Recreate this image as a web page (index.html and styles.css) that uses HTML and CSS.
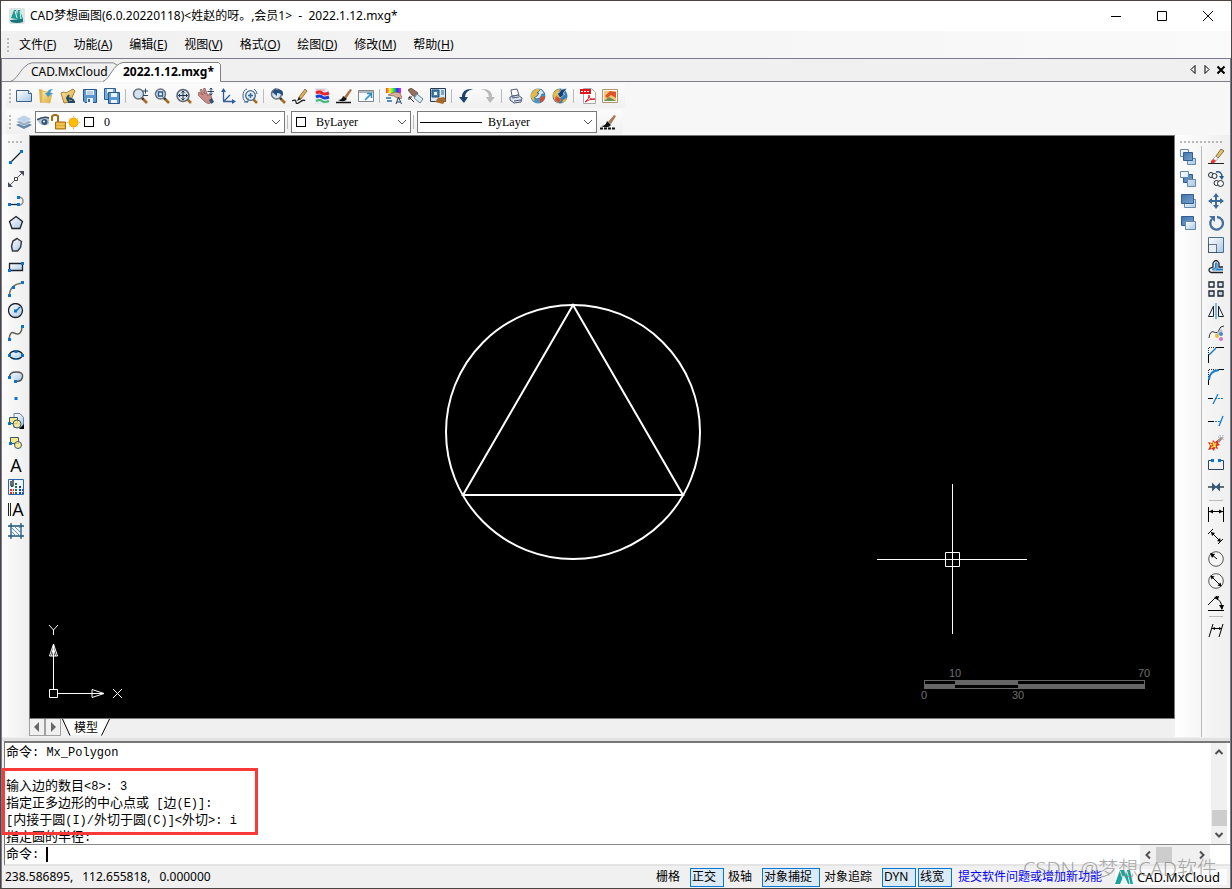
FILE: index.html
```html
<!DOCTYPE html>
<html lang="zh-CN">
<head>
<meta charset="utf-8">
<title>CAD梦想画图</title>
<link rel="stylesheet" href="styles.css">
</head>
<body>
<svg class="defs" aria-hidden="true">
  <defs>
    <linearGradient id="sky" x1="0" y1="0" x2="1" y2="1"><stop offset="0" stop-color="#ffffff"/><stop offset="1" stop-color="#a9c8e6"/></linearGradient>
    <linearGradient id="steel" x1="0" y1="0" x2="1" y2="1"><stop offset="0" stop-color="#3f73ad"/><stop offset="1" stop-color="#7aa3cd"/></linearGradient>
    <linearGradient id="gold" x1="0" y1="0" x2="1" y2="1"><stop offset="0" stop-color="#fbe9a5"/><stop offset="1" stop-color="#d9a53c"/></linearGradient>
    <linearGradient id="rainbow"><stop offset="0" stop-color="#f33"/><stop offset=".25" stop-color="#fe2"/><stop offset=".5" stop-color="#2e4"/><stop offset=".75" stop-color="#23f"/><stop offset="1" stop-color="#f2c"/></linearGradient>
    <symbol id="lens" viewBox="0 0 16 16"><path d="M10 10l5 5" stroke="#a56a28" stroke-width="2.6"/><path d="M9.500 9.500l2 2" stroke="#333" stroke-width="2"/><circle cx="6.500" cy="6" r="5" fill="#d4e2ef" stroke="#6a737c" stroke-width="1.500"/></symbol>
  </defs>
</svg>
<div class="window">
  <header class="titlebar">
    <svg class="app-logo" viewBox="0 0 16 16"><rect width="16" height="16" rx="2" fill="#dce5e5"/><path d="M2 10L5 2h2l1 5 1-5h2l3 9-3 1z" fill="#1b9a94"/><path d="M6 3l2 7M11 3l1 8" stroke="#e9f5f4"/><path d="M1 12l13-1v3q-6 2-12 0z" fill="#18747a"/></svg>
    <h1 class="title">CAD梦想画图(6.0.20220118)&lt;姓赵的呀。,会员1&gt;&nbsp; - &nbsp;2022.1.12.mxg*</h1>
    <button class="winbtn" aria-label="最小化"><svg viewBox="0 0 12 12"><path d="M1 6.500h10" class="k"/></svg></button>
    <button class="winbtn" aria-label="最大化"><svg viewBox="0 0 12 12"><path d="M1.500 1.500h9v9h-9z" class="k"/></svg></button>
    <button class="winbtn" aria-label="关闭"><svg viewBox="0 0 12 12"><path d="M1 1l10 10M11 1L1 11" class="k"/></svg></button>
  </header>
  <nav class="menubar" aria-label="菜单">
    <span class="grip"></span>
    <button class="menu">文件(<u>F</u>)</button><button class="menu">功能(<u>A</u>)</button><button class="menu">编辑(<u>E</u>)</button><button class="menu">视图(<u>V</u>)</button><button class="menu">格式(<u>O</u>)</button><button class="menu">绘图(<u>D</u>)</button><button class="menu">修改(<u>M</u>)</button><button class="menu">帮助(<u>H</u>)</button>
  </nav>
  <main class="frame">
    <div class="doctabs">
      <button class="doctab first"><svg class="tabshape" viewBox="0 0 112 20"><path d="M0 19.500C8 17 11 2 22 .5H106L112 4V20" fill="#f0f0f0" stroke="#808088"/></svg><span>CAD.MxCloud</span></button>
      <button class="doctab active"><svg class="tabshape" viewBox="0 0 118 20"><path d="M0 19.500C7 17 10 2 20 .5H115.500L117.500 2.500V19.500" fill="#fff" stroke="#808088"/><path d="M2 19.500H117" stroke="#fff"/></svg><span>2022.1.12.mxg*</span></button>
      <span class="fill"></span>
      <div class="tabnav">
        <button aria-label="上一个"><svg viewBox="0 0 10 10"><path d="M7 .500v8L3 4.500z" class="k"/></svg></button>
        <button aria-label="下一个"><svg viewBox="0 0 10 10"><path d="M3 .500v8L7 4.500z" class="k"/></svg></button>
        <button aria-label="关闭标签"><svg viewBox="0 0 10 10"><path d="M1.500 1.500l7 7M8.500 1.500l-7 7" class="k bold"/></svg></button>
      </div>
    </div>
    <div class="toolbars">
      <div class="toolbar">
        <span class="grip"></span>
        <button class="tool" aria-label="新建"><svg viewBox="0 0 16 16"><path d="M.5 2.500h12l3 3v8H.5z" fill="url(#sky)" stroke="#3f6186"/><path d="M12.500 2.500v3h3" fill="#fff" stroke="#3f6186"/></svg></button>
        <button class="tool" aria-label="打开"><svg viewBox="0 0 16 16"><path d="M1 1l4 1 1 12-4 1z" fill="#dfb04a"/><path d="M4 3l10 2-2 10-8-1z" fill="url(#gold)" stroke="#e3c069"/><path d="M15 1q-2 1-3 4h3l-5 4-3-4h2q1-4 6-4z" fill="#3e9bd5"/></svg></button>
        <button class="tool" aria-label="打开网络文件"><svg viewBox="0 0 16 16"><path d="M1 5l3-1 2 1 7-4 2 2-5 11-6 1z" fill="url(#gold)" stroke="#ad812c"/><path d="M15 14H8M9 7l-2 3 2 4M7 10q4 0 7 3" fill="none" stroke="#24496c" stroke-width="2"/></svg></button>
        <button class="tool" aria-label="保存"><svg viewBox="0 0 16 16"><path d="M1.500 1.500h13v13H3l-1.500-1.500z" fill="#5c98d1" stroke="#27548c"/><path d="M4 2h8v5H4zM5 10h6v5H5z" fill="#edf5fc"/><path d="M5 4h6M5 6h6" stroke="#8eaccb"/><path d="M6 11h2v3H6z" fill="#346ca3"/></svg></button>
        <button class="tool" aria-label="另存为"><svg viewBox="0 0 16 16"><path d="M.5.5h11v11H.5z" fill="#76abd9" stroke="#315e95"/><path d="M3 1h6v4H3z" fill="#edf5fc"/><path d="M4.500 4.500h11v11h-11z" fill="#5c98d1" stroke="#27548c"/><path d="M7 5h6v4H7zM7 12h6v3H7z" fill="#edf5fc"/></svg></button>
        <span class="sep"></span>
        <button class="tool" aria-label="缩放"><svg viewBox="0 0 16 16"><use href="#lens"/><path d="M11 3h5M13.500.5v5M11 7.500h5" stroke="#264865"/></svg></button>
        <button class="tool" aria-label="窗口缩放"><svg viewBox="0 0 16 16"><use href="#lens"/><path d="M4.500 4h4v4h-4z" fill="#fff" stroke="#245c95" stroke-width="1.500"/></svg></button>
        <button class="tool" aria-label="范围缩放"><svg viewBox="0 0 16 16"><path d="M11 11l4 4" stroke="#a56a28" stroke-width="2.500"/><circle cx="7" cy="7.500" r="6" fill="#d4dfe8" stroke="#59636d" stroke-width="1.500"/><path d="M7 3v9M2.500 7.500h9M5.500 4.500L7 3l1.500 1.500M5.500 10.500L7 12l1.500-1.500M4 6L2.500 7.500 4 9M10 6l1.500 1.500L10 9" stroke="#203447" fill="none"/></svg></button>
        <button class="tool" aria-label="平移"><svg viewBox="0 0 16 16"><path d="M0 5l2-1 3 3-3-5 1-1 4 5-2-5 2-1 3 8 1-2 2 1 1 5-3 4-4-2-7-7z" fill="#c98b88" stroke="#774847" stroke-width=".6"/><path d="M11 12l3-2 2 4-3 2z" fill="#31536f"/><path d="M13 0v7M9.500 3.500h7M11.500 1.500L13 0l1.500 1.500M11.500 5.500L13 7l1.500-1.500" stroke="#244863" fill="none"/></svg></button>
        <button class="tool" aria-label="坐标系"><svg viewBox="0 0 16 16"><path d="M3.500 13V2M3 13.500h11M4 13l6-6" stroke="#2d5e9a" stroke-width="1.300"/><path d="M1 4l2.500-4L6 4zM12 11l4 2.500-4 2.500z" fill="#2d5e9a"/></svg></button>
        <button class="tool" aria-label="实时缩放"><svg viewBox="0 0 16 16"><path d="M11 11l4 4" stroke="#a56a28" stroke-width="2.500"/><circle cx="8.500" cy="7.500" r="4.800" fill="#e7f1fa" stroke="#41698f" stroke-width="1.300"/><path d="M5 1Q1 2 1 8t5 6M2 14h4v-4M12 1q3 2 3 5" fill="none" stroke="#41698f"/><path d="M8.500 5v5M6 7.500h5" stroke="#3269a0" stroke-width="1.500"/></svg></button>
        <span class="sep"></span>
        <button class="tool" aria-label="上一视图"><svg viewBox="0 0 16 16"><use href="#lens"/><path d="M2 4l4-4v2q8-2 7 6-2-3-6-3v3z" fill="#254e80"/></svg></button>
        <button class="tool" aria-label="画笔"><svg viewBox="0 0 16 16"><path d="M0 13q4-2 4 1t4 0 5-1" stroke="#222" fill="none" stroke-width="1.300"/><path d="M6 12l1-3 6-8 2 2-6 8z" fill="#e3ae5c" stroke="#795023" stroke-width=".7"/><path d="M5 13l2-4 2 2z" fill="#222"/></svg></button>
        <button class="tool" aria-label="图层颜色"><svg viewBox="0 0 16 16"><path d="M1 0h11l3 2v14H1z" fill="#dfebf4"/><path d="M2 2h9" stroke="#f28c8c"/><path d="M2 5q4-2 6 0t7 0" stroke="#e8222c" stroke-width="3" fill="none"/><path d="M2 9q4-2 6 0t7 0" stroke="#1d3fd0" stroke-width="3" fill="none"/><path d="M2 13q4-2 6 0t7 0" stroke="#42b773" stroke-width="2" fill="none"/></svg></button>
        <button class="tool" aria-label="刷子"><svg viewBox="0 0 16 16"><path d="M8 9l6-8 2 1-6 9z" fill="#aa7147"/><path d="M2 12q4 0 5-4l4 3q-3 4-9 1z" fill="#111"/><path d="M0 14.500h15" stroke="#111" stroke-width="1.500"/></svg></button>
        <button class="tool" aria-label="全屏"><svg viewBox="0 0 16 16"><path d="M.5 2.500h15v11H.5z" fill="#f7fcff" stroke="#81868b"/><path d="M1 4h14" stroke="#b2b7bc" stroke-width="2"/><path d="M7 12l6-6M9 5.500h4.500V10" stroke="#238fce" fill="none" stroke-width="1.500"/></svg></button>
        <span class="sep"></span>
        <button class="tool" aria-label="特性"><svg viewBox="0 0 16 16"><path d="M0 0h15v5H0z" fill="url(#rainbow)"/><path d="M2 7l7-3 5 1 2 5-3 1-5-3z" fill="#dab099" stroke="#835a4a" stroke-width=".7"/><path d="M0 10h5M1 13h5" stroke="#246fa8" stroke-width="1.500"/><path d="M10 16l2.500-7 3 7M11 14h3" fill="none" stroke="#253d5a"/></svg></button>
        <button class="tool" aria-label="特性匹配"><svg viewBox="0 0 16 16"><path d="M0 2l3-2 7 5-3 4-3-2z" fill="#96705f" stroke="#54453e" stroke-width=".8"/><path d="M9 6l6 5-3 4-6-5z" fill="#d8ebf7" stroke="#668296"/><path d="M6 14L1 9M1 12V9h3" stroke="#222" fill="none"/></svg></button>
        <button class="tool" aria-label="块编辑"><svg viewBox="0 0 16 16"><path d="M.5.5h15v13H.5z" fill="#dbe9f4" stroke="#253d59"/><path d="M2 2h7v7H2z" fill="#4c81ad" stroke="#1c4d77"/><path d="M4 4h3v3H4z" fill="#e3f2ff"/><path d="M11 2h3v5h-3z" fill="#7fa3c2"/><path d="M5 14l3-4 6-1 2 3-3 4z" fill="#a76a29"/></svg></button>
        <span class="sep"></span>
        <button class="tool" aria-label="撤销"><svg viewBox="0 0 16 16"><path d="M15 1Q4 0 4 9H1l5 6 4-6H7q0-6 8-8z" fill="#1c416f"/></svg></button>
        <button class="tool" aria-label="重做"><svg viewBox="0 0 16 16"><path d="M1 1q11-1 11 8h3l-5 6-4-6h3Q9 3 1 1z" fill="#b9b9b9"/></svg></button>
        <span class="sep"></span>
        <button class="tool" aria-label="打印"><svg viewBox="0 0 16 16"><path d="M4 8L3 2l6-1 2 6z" fill="#fff" stroke="#555f7c"/><path d="M2 9l8-2 4 3-1 4-7 1-4-3z" fill="#dde3ee" stroke="#4c5878"/><path d="M4 10l7-1M6 13l7-1" stroke="#4c5878"/></svg></button>
        <button class="tool" aria-label="网页"><svg viewBox="0 0 16 16"><circle cx="8" cy="8" r="7.500" fill="#4b94c4"/><path d="M1 6q4-6 8-5l3 3-6 4-2 5q-4-3-3-7z" fill="#e8b844"/><path d="M10 9l5-1q0 5-5 7z" fill="#d64e2b"/><path d="M4 10q6 3 8-4h3l-4-5-4 4h2q-1 3-5 5z" fill="#d3ecff" stroke="#285782" stroke-width=".7"/></svg></button>
        <button class="tool" aria-label="导入网页"><svg viewBox="0 0 16 16"><circle cx="8" cy="8" r="7.500" fill="#367fb5"/><path d="M1 6q3-5 7-5L6 7l3 5-3 3q-5-3-5-9z" fill="#efb936"/><path d="M4 8l5 3-2 4-4-3z" fill="#d64e2b"/><path d="M11 12l4-2q-1 4-5 5z" fill="#efb936"/><path d="M15 1Q9 0 7 5H5l3 5 5-4h-2q1-3 4-5z" fill="#193e70" stroke="#d3ecff" stroke-width=".6"/></svg></button>
        <span class="sep"></span>
        <button class="tool" aria-label="输出PDF"><svg viewBox="0 0 16 16"><path d="M3.500.5h8l4 4v11h-12z" fill="#fff" stroke="#aaa"/><path d="M0 1h11v5H0z" fill="#df161d"/><path d="M5 14q5-4 4-7 0 5 6 4-6 0-10 3z" fill="none" stroke="#df161d"/><path d="M1 3.500h9" stroke="#fff" stroke-dasharray="2 1"/></svg></button>
        <button class="tool" aria-label="输出图片"><svg viewBox="0 0 16 16"><path d="M.5 1.500h15v13H.5z" fill="#fff" stroke="#b39272"/><path d="M2 3h12v10H2z" fill="#f7c67a"/><path d="M3 8l5-5 6 1v6l-5-3-4 3z" fill="#dd5426"/><path d="M2 13l5-4 7 4z" fill="#669253"/></svg></button>
      </div>
      <div class="toolbar">
        <span class="grip"></span>
        <button class="tool" aria-label="图层管理"><svg viewBox="0 0 16 16"><path d="M0 11l8-4 8 4-8 4z" fill="#6685a4"/><path d="M0 8l8-4 8 4-8 4z" fill="#92aec8" stroke="#fff" stroke-width=".5"/><path d="M0 5l8-4 8 4-8 4z" fill="#bed3e5" stroke="#fff" stroke-width=".5"/></svg></button>
        <div class="combo layer">
          <svg class="small" viewBox="0 0 13 16"><path d="M0 5q6-3 12-1v6q-6 3-10-1z" fill="#b8c4d1"/><path d="M0 6q6-4 12-2" stroke="#324b66" fill="none" stroke-width="1.500"/><circle cx="7.500" cy="8" r="3" fill="#33587e"/><circle cx="7" cy="7.500" r="1" fill="#fff"/></svg>
          <svg class="lock" viewBox="0 0 16 16"><path d="M1.500 7V2.500Q4-.5 7.500 2v6" fill="none" stroke="#a36f16" stroke-width="2"/><path d="M5 8h10v7H5z" fill="#e2a92b" stroke="#a36f16"/><path d="M6 10h8M6 13h8" stroke="#ffe085"/></svg>
          <svg class="small" viewBox="0 0 13 16"><path d="M6.500 2v13M0 8.500h13M2 4l9 9M11 4l-9 9" stroke="#e5bb45" stroke-dasharray="1 1"/><circle cx="6.500" cy="8.500" r="4.500" fill="#ffbf00" stroke="#f19c0c"/></svg>
          <span class="swatch"></span>
          <select aria-label="图层"><option>0</option></select>
          <svg class="chev" viewBox="0 0 10 10"><path d="M1 3l4 4 4-4"/></svg>
        </div>
        <span class="sep"></span>
        <div class="combo color">
          <span class="swatch"></span>
          <select aria-label="颜色"><option>ByLayer</option></select>
          <svg class="chev" viewBox="0 0 10 10"><path d="M1 3l4 4 4-4"/></svg>
        </div>
        <span class="sep"></span>
        <div class="combo linetype">
          <span class="line"></span>
          <select aria-label="线型"><option>ByLayer</option></select>
          <svg class="chev" viewBox="0 0 10 10"><path d="M1 3l4 4 4-4"/></svg>
        </div>
        <button class="tool" aria-label="线型刷"><svg viewBox="0 0 16 16"><path d="M8 8l6-7 2 1-5 8z" fill="#ad795b"/><path d="M1 12q5 0 6-5l4 4q-3 4-10 1z" fill="#111"/><path d="M0 14.500h16" stroke="#111" stroke-width="2" stroke-dasharray="3 1"/></svg></button>
      </div>
    </div>
    <div class="workspace">
      <aside class="side left" aria-label="绘图工具">
        <span class="hgrip"></span>
        <button class="tool" aria-label="直线"><svg viewBox="0 0 16 16"><path d="M3 13L13 3" class="d b"/><path d="M1 12h3v3H1zM12 1h3v3h-3z" class="n"/></svg></button>
        <button class="tool" aria-label="构造线"><svg viewBox="0 0 16 16"><path d="M1 15L15 1" stroke="#555"/><path d="M0 16v-5l5 5zM16 0v5l-5-5z" fill="#444b5c"/><path d="M6.500 6.500h3v3h-3z" fill="#fff" stroke="#444"/></svg></button>
        <button class="tool" aria-label="多段线"><svg viewBox="0 0 16 16"><path d="M2 11.500h9" class="d b"/><path d="M10 4q5 0 5 4t-4 4" fill="none" stroke="#999184" stroke-width="1.500"/><path d="M0 10h3v3H0zM9 3h3v3H9zM9 10h3v3H9z" class="n"/></svg></button>
        <button class="tool" aria-label="正多边形"><svg viewBox="0 0 16 16"><path d="M8 1.500L14.500 6.500 12 13.500H4L1.500 6.500z" fill="url(#sky)" class="d"/></svg></button>
        <button class="tool" aria-label="面域"><svg viewBox="0 0 16 16"><path d="M9 1.500l4.500 3-1 6-3 3.500H4.500l-1-5 1.500-5z" fill="url(#sky)" stroke="#3b3d42" stroke-width="1.500"/></svg></button>
        <button class="tool" aria-label="矩形"><svg viewBox="0 0 16 16"><path d="M1.500 4.500h13v7h-13z" fill="url(#sky)" class="d"/><path d="M0 10h3v3H0zM13 3h3v3h-3z" class="n"/></svg></button>
        <button class="tool" aria-label="圆弧"><svg viewBox="0 0 16 16"><path d="M1.500 14Q2 3 15 2" fill="none" stroke="#77715f" stroke-width="1.500"/><path d="M0 13h3v3H0zM4 5h3v3H4zM13 0h3v3h-3z" class="n"/></svg></button>
        <button class="tool" aria-label="圆"><svg viewBox="0 0 16 16"><circle cx="7.500" cy="7.500" r="7" fill="url(#sky)" class="d"/><path d="M8 8l4-4" stroke="#0868bf" stroke-width="1.500"/><path d="M6 6.500h3v3H6z" class="n"/></svg></button>
        <button class="tool" aria-label="样条曲线"><svg viewBox="0 0 16 16"><path d="M1 14Q2 6 6 8t6 0q2-2 2-6" fill="none" stroke="#656257" stroke-width="1.500"/><path d="M0 13h3v3H0zM13 0h3v3h-3z" class="n"/></svg></button>
        <button class="tool" aria-label="椭圆"><svg viewBox="0 0 16 16"><ellipse cx="8" cy="8" rx="6.500" ry="4" fill="url(#sky)" class="d"/><path d="M0 7h3v3H0zM13 7h3v3h-3zM6.500 3h3v3h-3zM6.500 11h3v2h-3z" class="n"/></svg></button>
        <button class="tool" aria-label="椭圆弧"><svg viewBox="0 0 16 16"><path d="M1.500 8q0-5 7-5t6 5-6 4" fill="url(#sky)" stroke="#555" stroke-width="1.500"/><path d="M0 7h3v3H0zM6 11h3v3H6z" class="n"/></svg></button>
        <button class="tool" aria-label="点"><svg viewBox="0 0 16 16"><path d="M6.500 6h3v3h-3z" class="n"/></svg></button>
        <button class="tool" aria-label="插入块"><svg viewBox="0 0 16 16"><path d="M6 .5h6l3.500 4v10H6z" fill="url(#sky)" stroke="#6283a5"/><path d="M1.500 4.500h8v6h-8z" fill="#f7e985" stroke="#385775"/><circle cx="9" cy="11" r="4" fill="#f7e985" fill-opacity=".8" stroke="#385775"/><path d="M0 9h3v3H0z" class="n"/><path d="M16 11v5h-5z"/></svg></button>
        <button class="tool" aria-label="创建块"><svg viewBox="0 0 16 16"><path d="M2.500 2.500h8v6h-8z" fill="#f7e985" stroke="#385775"/><circle cx="10" cy="10" r="3.500" fill="#f7e985" fill-opacity=".8" stroke="#385775"/><path d="M1 7h3v3H1z" class="n"/></svg></button>
        <button class="tool letter" aria-label="单行文字">A</button>
        <button class="tool" aria-label="图片"><svg viewBox="0 0 16 16"><path d="M.5.5h15v15H.5z" fill="#eef7ff" stroke="#2866ae"/><path d="M3 2v4q0 2 2 1V1" fill="none" class="d"/><path d="M2 11h4M2 14h4" stroke="#e32626" stroke-width="2" stroke-dasharray="2 1"/><path d="M7 5h2M7 8h3M7 11h3M7 14h3" stroke="#286e39" stroke-width="2" stroke-dasharray="2 1"/><path d="M11 8h2M11 11h4M11 14h4" stroke="#253f91" stroke-width="2" stroke-dasharray="2 1"/></svg></button>
        <button class="tool letter" aria-label="多行文字"><span class="bars"></span>A</button>
        <button class="tool" aria-label="图案填充"><svg viewBox="0 0 16 16"><path d="M0 3h16M0 13h16M3 0v16M13 0v16" stroke="#1d537c" stroke-width="1.300"/><path d="M3 4l9 9M7 4l6 6M11 4l2 2M3 8l5 5" stroke="#5b91bd"/></svg></button>
      </aside>
      <section class="center">
        <div class="canvas">
          <svg class="figure" viewBox="0 0 260 260"><circle cx="129" cy="130" r="127"/><path d="M129 3L19 193H239z"/></svg>
          <svg class="cross" viewBox="0 0 151 151"><path d="M0 75.500h150M75.500 0v150M68.500 68.500h14v14h-14z"/></svg>
          <svg class="ucs" viewBox="0 0 90 80"><path d="M5 3l4.500 5L14 3M9.500 8v5M9.500 22l-4 12h8zM9.500 25l-2 9M9.500 25l2 9M9.500 22v45M5.500 67.500h8v8h-8zM13.500 71.500h46M60 71.500l-12-4v8zM69 67l9 9M78 67l-9 9"/></svg>
          <svg class="scale" viewBox="0 0 240 38"><path d="M10 16h221v9H10z" fill="#666"/><path d="M11 17h30v3H11zM41 21h63v3H41zM104 17h126v3H104z"/><text x="35" y="13">10</text><text x="224" y="13">70</text><text x="7" y="35">0</text><text x="98" y="35">30</text></svg>
        </div>
        <div class="modelbar">
          <button class="step" aria-label="向左"><svg viewBox="0 0 8 10"><path d="M6 0v10L1 5z"/></svg></button>
          <button class="step" aria-label="向右"><svg viewBox="0 0 8 10"><path d="M2 0v10l5-5z"/></svg></button>
          <button class="model"><svg class="tabshape" viewBox="0 0 48 17"><path d="M0 0h48L40 16H8z" fill="#fff"/><path d="M.5 0L8 16.500M39.500 16.500L47.500 0" class="k"/></svg><span>模型</span></button>
        </div>
      </section>
      <aside class="side right" aria-label="修改工具">
        <span class="hgrip wide"></span>
        <div class="cols">
          <div class="col order">
            <button class="tool" aria-label="前置"><svg viewBox="0 0 16 16"><path d="M.5.5h8v7h-8zM7.500 9.500h8v6h-8z" fill="url(#sky)" stroke="#6689ac"/><path d="M3.500 3.500h9v8h-9z" fill="url(#steel)" stroke="#315e91"/></svg></button>
            <button class="tool" aria-label="后置"><svg viewBox="0 0 16 16"><path d="M3.500 3.500h9v8h-9z" fill="url(#steel)" stroke="#315e91"/><path d="M.5.500h8v6h-8zM7.500 8.500h8v7h-8z" fill="url(#sky)" stroke="#6689ac"/></svg></button>
            <button class="tool" aria-label="置于对象之上"><svg viewBox="0 0 16 16"><path d="M4.500 6.500h11v8h-11z" fill="url(#sky)" stroke="#6689ac"/><path d="M1.500 1.500h12v9h-12z" fill="url(#steel)" stroke="#315e91"/></svg></button>
            <button class="tool" aria-label="置于对象之下"><svg viewBox="0 0 16 16"><path d="M1.500 1.500h12v9h-12z" fill="url(#steel)" stroke="#315e91"/><path d="M5.500 6.500h10v8h-10z" fill="url(#sky)" stroke="#6689ac"/></svg></button>
          </div>
          <div class="col modify">
            <button class="tool" aria-label="删除"><svg viewBox="0 0 16 16"><path d="M0 14.500h16" stroke="#222"/><path d="M8 7l5-7 3 2-6 7z" fill="#e9c264" stroke="#5d5233" stroke-width=".8"/><path d="M8 7l2 2-2 3-3-2z" fill="#f5f5f5" stroke="#777" stroke-width=".5"/><path d="M5 10l3 2-2 2H3V12z" fill="#e7372a"/></svg></button>
            <button class="tool" aria-label="复制"><svg viewBox="0 0 16 16"><g fill="#f5f8fa" stroke="#24282c"><circle cx="3" cy="4" r="2.500"/><circle cx="6.500" cy="5" r="2.500"/><circle cx="8.500" cy="12" r="2.500"/><circle cx="12.500" cy="12.500" r="3"/></g><path d="M8 1q6-1 6 5" fill="none" stroke="#245b90" stroke-width="1.500"/><path d="M11 5h5l-2 4z" fill="#245b90"/></svg></button>
            <button class="tool" aria-label="移动"><svg viewBox="0 0 16 16"><path d="M8 0l3 4H9v3h3V5l4 3-4 3V9H9v3h2l-3 4-3-4h2V9H4v2L0 8l4-3v2h3V4H5z" fill="#3d6b9a"/></svg></button>
            <button class="tool" aria-label="旋转"><svg viewBox="0 0 16 16"><path d="M4 4a6.300 6.300 0 1 0 5-2" fill="none" stroke="#456f9c" stroke-width="2.300"/><path d="M1 1l6 0v6z" fill="#456f9c"/></svg></button>
            <button class="tool" aria-label="缩放对象"><svg viewBox="0 0 16 16"><path d="M.5.500h15v15H.5z" fill="url(#sky)" stroke="#476f97"/><path d="M.5 7.500h8v8h-8z" fill="#e5eff8" stroke="#000" stroke-dasharray="1 1"/></svg></button>
            <button class="tool" aria-label="偏移"><svg viewBox="0 0 16 16"><path d="M15 13.500H3Q0 12 1.500 9.500L5 8V4q3-5 6 0v4h4" fill="none" stroke="#1d2228" stroke-width="1.300"/><path d="M15 11H5q-1-1 1-1.500L7.500 9V5Q8 3 9 5v5h6" fill="none" stroke="#167ac7" stroke-width="1.200"/></svg></button>
            <button class="tool" aria-label="阵列"><svg viewBox="0 0 16 16"><path d="M1 1h5v5H1zM10 1h5v5h-5zM1 10h5v5H1zM10 10h5v5h-5z" fill="url(#sky)" class="d"/></svg></button>
            <button class="tool" aria-label="镜像"><svg viewBox="0 0 16 16"><path d="M5.500 3v10.500h-5zM10.500 3v10.500h5z" fill="#edf6fc" stroke="#1d2228"/><path d="M8 0v16" stroke="#107bcc"/></svg></button>
            <button class="tool" aria-label="编辑样条"><svg viewBox="0 0 16 16"><path d="M1 13Q2 5 6 7t5-2 5-4" fill="none" stroke="#333"/><path d="M7 10l6-6 2 2-6 6z" fill="#b9c7cf"/><circle cx="9" cy="11" r="2" fill="#ebc334"/><circle cx="13" cy="9" r="2" fill="#4d82d0"/><circle cx="13" cy="14" r="2" fill="#d872c7"/></svg></button>
            <button class="tool" aria-label="倒角"><svg viewBox="0 0 16 16"><path d="M.5 8V.5h7" stroke="#222" fill="none" stroke-dasharray="1 1"/><path d="M.5 16V8M8 .500h8" class="k"/><path d="M1 8l7-7" stroke="#107bcc" stroke-width="1.500"/></svg></button>
            <button class="tool" aria-label="圆角"><svg viewBox="0 0 16 16"><path d="M.5 8V.5h7" stroke="#222" fill="none" stroke-dasharray="1 1"/><path d="M.5 16v-6M10 .500h6" class="k"/><path d="M1 11Q1 2 11 1" fill="none" stroke="#107bcc" stroke-width="1.800"/></svg></button>
            <button class="tool" aria-label="修剪"><svg viewBox="0 0 16 16"><path d="M0 7.500h5" class="k"/><path d="M7 7.500h9" stroke="#107bcc" stroke-dasharray="2 1"/><path d="M5 13l5-10" stroke="#107bcc" stroke-width="1.300"/></svg></button>
            <button class="tool" aria-label="延伸"><svg viewBox="0 0 16 16"><path d="M0 8.500h6" class="k"/><path d="M7 8.500h5" stroke="#107bcc" stroke-dasharray="2 1"/><path d="M11 13l4-10" stroke="#107bcc" stroke-width="1.300"/></svg></button>
            <button class="tool" aria-label="分解"><svg viewBox="0 0 16 16"><path d="M0 7l4 1 1-3 2 2 4-3-1 4 2 2-3 1 1 3-3-1-1 3-2-2-4 1 2-4z" fill="#dc3022"/><path d="M2 9l2 1M5 7l1 3M8 8l-2 3M3 13l3-2M8 12l-2-1" stroke="#ffe64a" stroke-width="1.500"/><path d="M9 6l4-4 2 1-4 5z" fill="#a38c81"/><path d="M10 2h6M12 0v4M15 0v5" stroke="#99aab8" stroke-dasharray="1 1"/></svg></button>
            <button class="tool" aria-label="打断"><svg viewBox="0 0 16 16"><path d="M4 3.500H.5v9h15v-9H12" fill="none" stroke="#2c465f"/><path d="M3 2h3v3H3zM10 2h3v3h-3z" class="n"/></svg></button>
            <button class="tool" aria-label="合并"><svg viewBox="0 0 16 16"><path d="M0 8h16" class="d b"/><path d="M4 3.500v9L8.500 8zM12 3.500v9L7.500 8z" fill="#315a7b"/></svg></button>
            <span class="hsep"></span>
            <button class="tool" aria-label="线性标注"><svg viewBox="0 0 16 16"><path d="M.5 0v15M15.500 0v15M1 4.500h14" class="k"/><path d="M1 4.500l4-2v4zM15 4.500l-4-2v4z"/></svg></button>
            <button class="tool" aria-label="对齐标注"><svg viewBox="0 0 16 16"><path d="M0 5l5-5M10 15l5-5M3 3l10 10" class="k"/><path d="M3 3l4 1-3 3zM13 13l-4-1 3-3z"/></svg></button>
            <button class="tool" aria-label="半径标注"><svg viewBox="0 0 16 16"><circle cx="8" cy="8" r="7.300" fill="#f5f5f5" stroke="#555"/><path d="M3 3l6 5" class="k"/><path d="M2 2l5 1-3 4z"/></svg></button>
            <button class="tool" aria-label="直径标注"><svg viewBox="0 0 16 16"><circle cx="8" cy="8" r="7.300" fill="#f5f5f5" stroke="#555"/><path d="M3 3l10 10" class="k"/><path d="M2.500 2.500l4 1-3 3zM13.500 13.500l-4-1 3-3z"/></svg></button>
            <button class="tool" aria-label="角度标注"><svg viewBox="0 0 16 16"><path d="M0 15.500h16M0 10l9-9M7 3q7 2 7 11" class="k"/><path d="M6 2l5-1-1 4zM11 10h5l-2 5z"/></svg></button>
            <span class="hsep"></span>
            <button class="tool" aria-label="编辑标注"><svg viewBox="0 0 16 16"><path d="M1 14L5 1M11 14l4-13M4 5.500h10" class="k"/><path d="M4 5.500L7 4v3zM14 5.500L11 4v3z"/></svg></button>
          </div>
        </div>
      </aside>
    </div>
    <section class="command" aria-label="命令行">
      <div class="history">
        <div class="log">
          <p>命令<span class="mono">: Mx_Polygon</span></p>
          <p>&nbsp;</p>
          <p>输入边的数目<span class="mono">&lt;8&gt;: 3</span></p>
          <p>指定正多边形的中心点或<span class="mono"> [</span>边<span class="mono">(E)]:</span></p>
          <p><span class="mono">[</span>内接于圆<span class="mono">(I)/</span>外切于圆<span class="mono">(C)]&lt;</span>外切<span class="mono">&gt;: i</span></p>
          <p>指定圆的半径<span class="mono">:</span></p>
        </div>
        <div class="vscroll"><svg viewBox="0 0 10 10"><path d="M1.500 7L5 3.500 8.500 7"/></svg><span class="vthumb"></span><svg viewBox="0 0 10 10"><path d="M1.500 3L5 6.500 8.500 3"/></svg></div>
      </div>
      <div class="entry">
        <label for="cmd">命令<span class="mono">:</span></label>
        <span class="caret"></span>
        <input id="cmd" type="text">
        <div class="hscroll"><svg viewBox="0 0 10 10"><path d="M7 1.500L3.500 5 7 8.500"/></svg><span class="hthumb"></span><svg viewBox="0 0 10 10"><path d="M3 1.500L6.500 5 3 8.500"/></svg></div>
      </div>
      <span class="mark"></span>
    </section>
    <footer class="status">
      <div class="coords"><span>238.586895,</span><span>112.655818,</span><span>0.000000</span></div>
      <div class="toggles">
        <button>栅格</button><button class="on">正交</button><button>极轴</button><button class="on wide">对象捕捉</button><button class="wide">对象追踪</button><button class="on">DYN</button><button class="on">线宽</button>
      </div>
      <a class="feedback" href="#feedback">提交软件问题或增加新功能</a>
      <div class="brand"><svg viewBox="0 0 18 16"><path d="M0 15L5 1h4l2 5 1-5h3l3 14h-5L9 6 5 15z" fill="#18a49b"/><path d="M5 2l5 13M12 2l3 13" stroke="#d9efee"/></svg><span>CAD.MxCloud</span></div>
      <span class="watermark">CSDN @梦想CAD软件</span>
    </footer>
  </main>
</div>
</body>
</html>
```
FILE: styles.css
```css
* { box-sizing: border-box; }
body {
  margin: 0;
  font: 12px/16px "Noto Sans", "Noto Sans CJK SC", sans-serif;
  color: #000;
}
button {
  font: inherit;
  color: inherit;
  background: none;
  border: 0;
  padding: 0;
}
svg { display: block; }
.defs { position: absolute; width: 0; height: 0; }
.k { fill: none; stroke: #000; }
.bold { stroke-width: 2; }
.d { stroke: #1d2228; stroke-width: 1.3; }
.b { fill: none; }
.n { fill: #0a74cc; }

.window {
  height: 100vh;
  display: flex;
  flex-direction: column;
  border: 1px solid #4a4543;
  background: #f0f0f0;
}

/* title and menu */
.titlebar {
  display: flex;
  align-items: center;
  height: 30px;
  background: #fff;
  flex: none;
}
.app-logo { width: 16px; height: 16px; margin: 0 5px 0 8px; }
.title { margin: 0; flex: 1; font-size: 12px; font-weight: 400; white-space: nowrap; }
.winbtn { width: 46px; height: 30px; display: grid; place-items: center; }
.winbtn svg { width: 12px; height: 12px; }
.menubar {
  display: flex;
  align-items: center;
  gap: 1px;
  height: 27px;
  flex: none;
  padding-left: 6px;
  background: linear-gradient(90deg, #f0f0f0, #fafafa);
}
.menu { padding: 0 8px; white-space: nowrap; }
.grip {
  width: 2px;
  height: 14px;
  margin-right: 1px;
  background: repeating-linear-gradient(#b8b8b8 0 2px, transparent 2px 4px);
}

.frame {
  flex: 1;
  min-height: 0;
  display: flex;
  flex-direction: column;
  border: 1px solid #7b7b8b;
  border-bottom: 0;
}

/* document tabs */
.doctabs {
  display: flex;
  align-items: flex-end;
  height: 23px;
  flex: none;
  padding-left: 9px;
  border-bottom: 1px solid #808088;
}
.doctab { position: relative; height: 20px; margin-bottom: -1px; text-align: left; white-space: nowrap; }
.doctab span { position: relative; }
.tabshape { position: absolute; inset: 0; width: 100%; height: 100%; }
.doctab.first { width: 108px; padding-left: 20px; }
.doctab.active { width: 118px; margin-left: -16px; padding-left: 20px; font-weight: 700; }
.fill { flex: 1; }
.tabnav { display: flex; gap: 4px; align-self: center; padding-right: 4px; }
.tabnav svg { width: 10px; height: 10px; }

/* horizontal toolbars */
.toolbars {
  display: flex;
  flex-direction: column;
  align-items: flex-start;
  gap: 2px;
  padding: 2px 0 1px 4px;
  background: #f7f7f7;
  flex: none;
}
.toolbar {
  display: flex;
  align-items: center;
  height: 24px;
  padding: 0 4px 0 3px;
  border-radius: 3px;
  background: linear-gradient(#fcfcfc, #f0f0f0);
}
.toolbar .grip { margin-right: 2px; }
.tool { width: 22px; height: 22px; flex: none; display: grid; place-items: center; }
.tool svg { width: 16px; height: 16px; }
.sep { width: 6px; height: 14px; border-left: 1px solid #bbb; margin-left: 2px; margin-right: -2px; flex: none; }
.combo {
  display: flex;
  align-items: center;
  height: 22px;
  border: 1px solid #7a7a7a;
  background: #fff;
  padding: 0 3px 0 2px;
}
.combo.layer { width: 250px; padding-left: 1px; }
.combo.color { width: 120px; padding-left: 4px; }
.combo.linetype { width: 180px; }
.combo select {
  flex: 1;
  min-width: 0;
  appearance: none;
  border: 0;
  padding: 0;
  background: none;
  color: #000;
  font: 12px/16px "Liberation Serif", serif;
}
.combo .small { width: 13px; height: 16px; }
.combo .lock { width: 17px; height: 16px; }
.swatch { width: 10px; height: 10px; border: 1px solid #000; margin: 0 10px 0 4px; }
.color .swatch { margin-left: 0; }
.line { width: 62px; height: 1px; background: #000; margin-right: 6px; }
.chev { width: 10px; height: 10px; fill: none; stroke: #555; }

/* drawing area */
.workspace { display: flex; flex: 1; min-height: 0; }
.side { flex: none; padding-top: 6px; }
.left { width: 27px; padding-left: 3px; background: linear-gradient(90deg, #fcfcfc, #eee); }
.hgrip {
  display: block;
  width: 14px;
  height: 2px;
  margin: 0 0 3px 3px;
  background: repeating-linear-gradient(90deg, #b8b8b8 0 2px, transparent 2px 4px);
}
.hgrip.wide { width: 44px; margin-left: 5px; }
.letter { font: 18px/22px "Open Sans", sans-serif; }
.letter:has(.bars) { display: flex; align-items: center; justify-content: center; gap: 1px; }
.bars { width: 3px; height: 13px; border: solid #222; border-width: 0 1px; }
.center { flex: 1; min-width: 0; display: flex; flex-direction: column; }
.canvas {
  position: relative;
  flex: 1;
  min-height: 0;
  overflow: hidden;
  background: #000;
  border: 1px solid #777;
}
.canvas svg { position: absolute; fill: none; stroke: #fff; }
.canvas .figure { left: 414px; top: 166px; width: 260px; height: 260px; stroke-width: 2; }
.canvas .cross { left: 847px; top: 348px; width: 151px; height: 151px; }
.canvas .ucs { left: 14px; bottom: 16px; width: 90px; height: 80px; }
.canvas .scale { right: 20px; bottom: 16px; width: 240px; height: 38px; fill: #000; stroke: none; }
.scale text { font: 11px "Liberation Sans", sans-serif; fill: #707070; }
.modelbar { display: flex; height: 18px; flex: none; }
.step {
  width: 16px;
  height: 17px;
  display: grid;
  place-items: center;
  border: 1px solid #a0a0a0;
  border-top: 0;
}
.step svg { width: 8px; height: 10px; fill: #666; }
.model { position: relative; width: 48px; height: 17px; margin-left: 1px; }
.model span { position: relative; }
.right { width: 55px; background: linear-gradient(90deg, #fefefe, #efefef); display: flex; flex-direction: column; }
.cols { display: flex; flex: 1; min-height: 0; }
.col { display: flex; flex-direction: column; align-items: center; }
.order { width: 27px; padding-right: 1px; border-right: 1px solid #bbb; }
.modify { width: 28px; }
.hsep { width: 14px; height: 6px; border-top: 1px solid #bbb; margin: 2px 0 -2px; flex: none; }

/* command window */
.command {
  position: relative;
  flex: none;
  margin-top: 1px;
  border-top: 3px solid #e2e2e2;
  font: 13px/17px "Noto Sans CJK SC", sans-serif;
}
.mono { font: 12px/16px "Liberation Mono", monospace; white-space: pre; }
.history {
  display: flex;
  height: 104px;
  margin-left: 2px;
  border-top: 2px solid #777;
  border-left: 1px solid #777;
  border-bottom: 1px solid #888;
  background: #fff;
  overflow: hidden;
}
.log { flex: 1; padding-left: 1px; }
.log p { margin: 0; height: 17px; line-height: 16px; white-space: nowrap; }
.vscroll {
  width: 16px;
  margin-right: 3px;
  display: flex;
  flex-direction: column;
  align-items: center;
  justify-content: space-between;
  padding: 4px 0;
  background: #f0f0f0;
}
.vscroll svg, .hscroll svg { width: 10px; height: 10px; fill: none; stroke: #505050; stroke-width: 2; }
.vthumb { width: 15px; height: 16px; background: #cdcdcd; margin-top: auto; margin-bottom: 4px; }
.entry {
  display: flex;
  align-items: center;
  height: 21px;
  margin-left: 2px;
  padding-left: 1px;
  border-left: 1px solid #777;
  border-bottom: 2px solid #e4e4e4;
  background: #fff;
}
.entry label { height: 19px; line-height: 16px; white-space: nowrap; }
.caret { width: 2px; height: 15px; margin-left: 7px; background: #000; }
.entry input { flex: 1; min-width: 0; border: 0; padding: 0 4px; background: none; font: inherit; outline: 0; }
.hscroll {
  display: flex;
  align-items: center;
  gap: 3px;
  width: 70px;
  height: 19px;
  padding: 0 3px;
  margin-right: 20px;
  background: #f0f0f0;
}
.hthumb { width: 16px; height: 16px; background: #cdcdcd; margin-right: auto; }
.mark {
  position: absolute;
  left: 0;
  top: 27px;
  width: 256px;
  height: 67px;
  border: 3px solid #fc3939;
}

/* status bar */
.status { position: relative; display: flex; align-items: center; height: 22px; flex: none; padding: 0 3px; }
.coords { display: flex; gap: 9px; flex: 1; }
.toggles { display: flex; gap: 2px; margin-right: 6px; }
.toggles button { height: 19px; width: 34px; padding: 0 1px; text-align: left; border: 1px solid transparent; white-space: nowrap; }
.toggles .wide { width: 58px; }
.toggles .on { background: #dceaf6; border-color: #0078d7; }
.feedback { color: #00f; text-decoration: none; white-space: nowrap; }
.brand { display: flex; align-items: center; gap: 4px; margin-left: 13px; padding-right: 7px; background: #fafafa; font-size: 13px; }
.brand svg { width: 18px; height: 16px; }
.watermark {
  position: absolute;
  right: 13px;
  top: -9px;
  font: 20px/24px "Noto Sans", "Noto Sans CJK SC", sans-serif;
  font-weight: 300;
  color: rgba(130, 130, 130, .7);
  white-space: nowrap;
  pointer-events: none;
}
```
